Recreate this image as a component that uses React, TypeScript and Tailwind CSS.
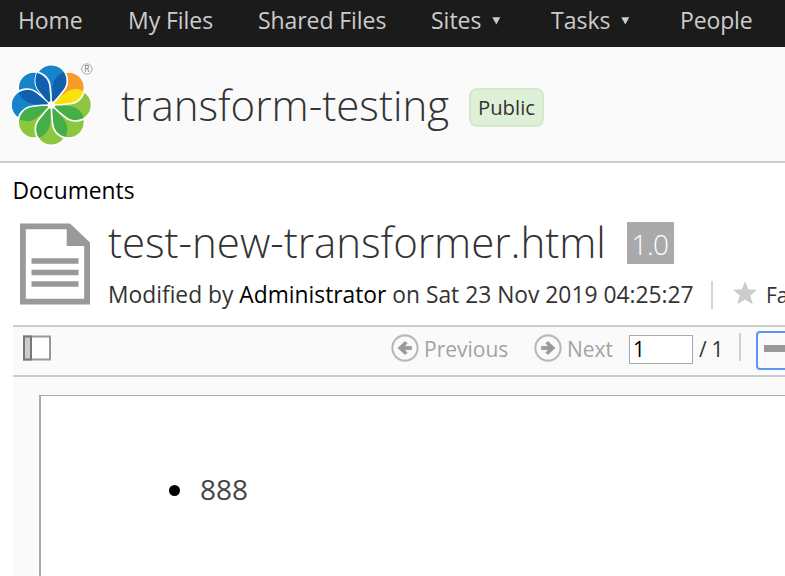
const PETAL = 'M0 0C-4.5 -4.5 -8.9 -9.6 -12.4 -14.2A16 16 0 1 1 12.4 -14.2C8.9 -9.6 4.5 -4.5 0 0Z';

const petals = [
  { light: '#1684c9', dark: '#125fae' },
  { light: '#f99b2a', dark: '#fbe10a' },
  { light: '#8dc740', dark: '#46ae49' },
  { light: '#8dc740', dark: '#46ae49' },
  { light: '#8dc740', dark: '#46ae49' },
  { light: '#8dc740', dark: '#46ae49' },
  { light: '#1684c9', dark: '#125fae' },
  { light: '#1684c9', dark: '#125fae' },
];

function Petal({ index }: { index: number }) {
  const { light, dark } = petals[index];
  return (
    <g transform={`rotate(${index * 45})`}>
      <path d={PETAL} fill={light} />
      <g clipPath="url(#petal-next)">
        <path d={PETAL} fill={dark} />
      </g>
      <path d={PETAL} fill="none" stroke="#fff" strokeWidth="1.7" />
    </g>
  );
}

function Logo() {
  return (
    <svg width="86" height="86" viewBox="-41.3 -43 86 86" className="mt-[2px] shrink-0">
      <defs>
        <clipPath id="petal-first">
          <path d={PETAL} />
        </clipPath>
        <clipPath id="petal-next">
          <path d={PETAL} transform="rotate(45)" />
        </clipPath>
      </defs>
      {[7, 6, 5, 4, 3, 2, 1, 0].map((i) => (
        <Petal key={i} index={i} />
      ))}
      <g clipPath="url(#petal-first)">
        <Petal index={7} />
      </g>
      <circle r="3.8" fill="#fff" />
      <circle cx="35.6" cy="-36" r="5.2" fill="none" stroke="#aaa" strokeWidth="1" />
      <text x="35.6" y="-33" fontSize="8.5" textAnchor="middle" fill="#777" fontFamily="Open Sans">
        R
      </text>
    </svg>
  );
}

function Caret() {
  return (
    <svg width="9" height="8" viewBox="0 0 9 8">
      <path d="M0.3 0.3H8.3L4.3 7.5Z" fill="#ccc" />
    </svg>
  );
}

function DocumentIcon() {
  return (
    <svg width="70" height="82" viewBox="0 0 70 82" className="shrink-0">
      <path d="M0 0.5H50L70 19.5V81.5H0Z" fill="#999" />
      <path d="M5.8 6.3H46.7V23H64.2V75.7H5.8Z" fill="#fff" />
      <path d="M11.5 35.3H58.5V40.7H11.5ZM11.5 46.7H58.5V52.3H11.5ZM11.5 58.3H58.5V63.7H11.5Z" fill="#999" />
    </svg>
  );
}

function ArrowIcon({ left = false }: { left?: boolean }) {
  return (
    <svg width="28" height="28" viewBox="-14 -14 28 28" className="mb-[2px] shrink-0">
      <circle r="12.6" fill="none" stroke="#b8b8b8" strokeWidth="2.1" />
      <path
        d="M-6.7 -1.8H0.3L-2.4 -5L0.2 -6.5L7.2 0L0.2 6.5L-2.4 5L0.3 1.8H-6.7Z"
        fill="#999"
        stroke="#999"
        strokeWidth="0.4"
        transform={left ? 'scale(-1 1)' : undefined}
      />
    </svg>
  );
}

export default function App() {
  return (
    <div className="flex h-[576px] w-[785px] flex-col overflow-hidden bg-white font-['Open_Sans',sans-serif] whitespace-nowrap text-[#333]">
      <nav className="flex h-[47px] shrink-0 items-center bg-[#1b1b1b] pb-[6px] pl-[18px] text-[23px] text-[#ccc]">
        <span className="w-[110px] tracking-[-0.1px]">Home</span>
        <span className="w-[130px] tracking-[-0.05px]">My Files</span>
        <span className="w-[173px] tracking-[-0.08px]">Shared Files</span>
        <span className="flex w-[120px] items-center gap-[10px]">Sites <Caret /></span>
        <span className="flex w-[129px] items-center gap-[11px]">Tasks <Caret /></span>
        <span className="tracking-[-0.15px]">People</span>
      </nav>

      <header className="flex h-[116px] shrink-0 items-center border-b-2 border-[#ccc] bg-[#fafafa] pl-[10px]">
        <Logo />
        <h1 className="mt-[2px] ml-[25px] w-[348px] text-[42px] leading-[60px] font-light">transform-testing</h1>
        <span className="mt-[7px] flex h-[39px] w-[75px] items-center justify-center rounded-lg border-2 border-[#d5e9c6] bg-[#dff0d8] text-[20.3px] leading-none">
          Public
        </span>
      </header>

      <div className="h-[54px] shrink-0 pt-[11px] pl-[12.5px] text-[22.8px] leading-[34px] text-black">Documents</div>

      <div className="flex h-[108px] shrink-0 pl-[20px]">
        <div className="pt-[6px]"><DocumentIcon /></div>
        <div className="ml-[18px]">
          <div className="flex h-[52px] pt-[5px]">
            <h2 className="w-[519px] text-[42px] leading-[40px] font-light tracking-[-0.03px]">test-new-transformer.html</h2>
            <span className="h-[42px] w-[47px] bg-[#aaa] pr-px text-center text-[28px] leading-[44px] font-light tracking-[-0.5px] text-white">1.0</span>
          </div>
          <div className="flex h-[50px] items-center">
            <span className="mt-[2px] w-[603px] text-[22.8px] leading-[34px]">
              Modified by <span className="text-black">Administrator</span> on Sat 23 Nov 2019 04:25:27
            </span>
            <span className="mt-px h-7 w-[2px] shrink-0 bg-[#d4d4d4]" />
            <svg width="24" height="24" viewBox="0 0 24 24" className="mb-[2px] ml-[20px] shrink-0">
              <path d="M12 0.2L15.3 8.3L24 8.8L17.3 14.5L19.7 23.2L12 18.4L4.3 23.2L6.7 14.5L0 8.8L8.7 8.3Z" fill="#ccc" />
            </svg>
            <span className="mt-[2px] ml-[9px] text-[21px] leading-[34px]">Fa</span>
          </div>
        </div>
      </div>

      <main className="ml-[13px] flex grow flex-col bg-[#fafafa]">
        <div className="flex h-[52px] shrink-0 items-center border-y-2 border-[#ccc] pb-[4px] pl-[10px] text-[21px] text-[#a3a3a3]">
          <div className="w-[368px] shrink-0">
            <svg width="28" height="26" viewBox="0 0 28 26" className="mb-[3px]">
              <path d="M1 1.5H27V24.5H1Z" fill="#fefefc" stroke="#999" strokeWidth="2" />
              <path d="M1 1.5H8V24.5H1Z" fill="#ccc" stroke="#777" strokeWidth="2" />
            </svg>
          </div>
          <div className="flex w-[143px] shrink-0 items-center gap-[5px]">
            <ArrowIcon left />
            <span className="mt-[2px]">Previous</span>
          </div>
          <div className="flex w-[95px] shrink-0 items-center gap-[5px]">
            <ArrowIcon />
            <span className="mt-[2px]">Next</span>
          </div>
          <div className="mt-px flex h-[29px] w-[64px] shrink-0 items-center border border-[#aaa] bg-white pl-[3px] text-black">
            <span className="mt-px">1</span>
          </div>
          <div className="mt-[2px] ml-[6px] w-[40px] shrink-0 tracking-[-0.3px] text-[#333]">/ 1</div>
          <div className="mb-[4px] h-7 w-[2px] shrink-0 bg-[#d0d0d0]" />
          <div className="mt-[2px] ml-[15px] flex h-[39px] w-[50px] shrink-0 items-center rounded border-2 border-[#5b97f2] pl-[6px]">
            <span className="mb-[4px] h-[7px] w-7 bg-[#999]" />
          </div>
        </div>
        <div className="mt-[18px] ml-[26px] flex grow border-t border-l-2 border-[#a9a9a9] bg-white pt-[73px] pl-[128px]">
          <span className="mt-[16px] h-[11px] w-[11px] rounded-full bg-black" />
          <span className="ml-[20px] text-[28px] leading-[40px] text-[#444]">888</span>
        </div>
      </main>
    </div>
  );
}
